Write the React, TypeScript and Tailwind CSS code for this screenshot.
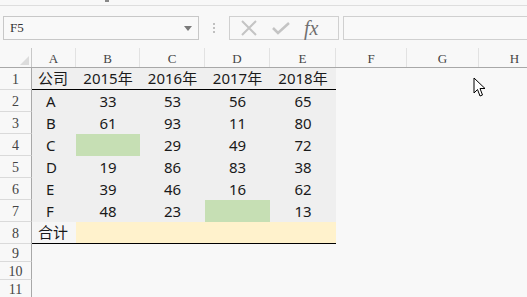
import React from 'react';

const COLS = [
  { key: 'A', w: 'w-[44px]' },
  { key: 'B', w: 'w-[64px]' },
  { key: 'C', w: 'w-[65px]' },
  { key: 'D', w: 'w-[65px]' },
  { key: 'E', w: 'w-[66px]' },
  { key: 'F', w: 'w-[71px]' },
  { key: 'G', w: 'w-[72px]' },
  { key: 'H', w: 'w-[72px]' },
];

type Cell = { text?: string; bg?: string };

const TABLE: Cell[][] = [
  [{ text: '公司' }, { text: '2015年' }, { text: '2016年' }, { text: '2017年' }, { text: '2018年' }],
  [{ text: 'A' }, { text: '33' }, { text: '53' }, { text: '56' }, { text: '65' }],
  [{ text: 'B' }, { text: '61' }, { text: '93' }, { text: '11' }, { text: '80' }],
  [{ text: 'C' }, { bg: 'bg-[#c6dfb4]' }, { text: '29' }, { text: '49' }, { text: '72' }],
  [{ text: 'D' }, { text: '19' }, { text: '86' }, { text: '83' }, { text: '38' }],
  [{ text: 'E' }, { text: '39' }, { text: '46' }, { text: '16' }, { text: '62' }],
  [{ text: 'F' }, { text: '48' }, { text: '23' }, { bg: 'bg-[#c6dfb4]' }, { text: '13' }],
  [
    { text: '合计' },
    { bg: 'bg-[#fff2cc]' },
    { bg: 'bg-[#fff2cc]' },
    { bg: 'bg-[#fff2cc]' },
    { bg: 'bg-[#fff2cc]' },
  ],
];

const serifUi = "font-['Liberation_Serif',serif]";
const sans = "font-['Noto_Sans','Noto_Sans_CJK_SC',sans-serif]";

function Toolbar() {
  return (
    <div className="h-[42px] flex items-start pt-[10px]">
      <div className="ml-[3px] w-[196px] h-[24px] border border-[#c8c8c8] bg-[#f9f9f9] flex items-center justify-between pl-[6px] pr-[6px]">
        <span className={`${serifUi} text-[13px] text-[#333]`}>F5</span>
        <svg width="8" height="5" viewBox="0 0 8 5">
          <path d="M0 0 L8 0 L4 5 Z" fill="#7a7a7a" />
        </svg>
      </div>
      <div className="w-[30px] h-[24px] flex flex-col items-center justify-center gap-[2px]">
        <span className="w-[2px] h-[2px] bg-[#c0c0c0]" />
        <span className="w-[2px] h-[2px] bg-[#c0c0c0]" />
        <span className="w-[2px] h-[2px] bg-[#c0c0c0]" />
      </div>
      <div className="w-[110px] h-[24px] border border-[#d0d0d0] flex items-center">
        <svg className="ml-[10px]" width="18" height="18" viewBox="0 0 18 18">
          <path d="M2 2 L16 16 M16 2 L2 16" stroke="#c4c4c4" strokeWidth="2" />
        </svg>
        <svg className="ml-[14px]" width="18" height="14" viewBox="0 0 18 14">
          <path d="M1 7 L6 12 L17 2" stroke="#c4c4c4" strokeWidth="2.5" fill="none" />
        </svg>
        <span className="ml-[14px] font-['Liberation_Serif',serif] italic text-[20px] leading-none text-[#707070]">
          fx
        </span>
      </div>
      <div className="ml-[4px] flex-1 h-[24px] border border-[#d0d0d0] border-r-0 bg-[#f9f9f9]" />
    </div>
  );
}

function HeaderRow() {
  return (
    <div className="flex h-[20px] border-b border-[#a8a8a8]">
      <div className="w-[32px] shrink-0 border-r border-[#c8c8c8] flex items-end justify-end pr-[2px] pb-[2px]">
        <svg width="9" height="9" viewBox="0 0 9 9">
          <path d="M9 0 L9 9 L0 9 Z" fill="#dcdcdc" />
        </svg>
      </div>
      {COLS.map((c) => (
        <div
          key={c.key}
          className={`${c.w} shrink-0 border-r border-[#e2e2e2] flex items-center justify-center pt-[2px] ${serifUi} text-[13px] text-[#444]`}
        >
          {c.key}
        </div>
      ))}
    </div>
  );
}

function RowHeader({ n, h }: { n: number; h: string }) {
  return (
    <div
      className={`w-[32px] ${h} shrink-0 border-r border-b border-r-[#a8a8a8] border-b-[#dadada] flex items-center justify-center pt-[2px] ${serifUi} text-[14px] text-[#444]`}
    >
      {n}
    </div>
  );
}

export default function App() {
  return (
    <div className="w-[527px] h-[297px] overflow-hidden bg-[#f8f8f8] relative">
      <div className="h-[6px] border-b border-[#dedede] relative">
        <span className="absolute left-[105px] top-0 w-[4px] h-[2px] bg-[#888]" />
      </div>
      <Toolbar />
      <HeaderRow />
      {TABLE.map((row, r) => (
        <div key={r} className="flex">
          <RowHeader n={r + 1} h="h-[22px]" />
          {row.map((cell, c) => {
            const underline = r === 0 || r === 7;
            return (
              <div
                key={c}
                className={`${COLS[c].w} h-[22px] shrink-0 flex items-center ${
                  c === 0 ? 'justify-start pl-[6px]' : 'justify-center'
                } ${sans} text-[15px] text-[#1a1a1a] ${
                  cell.bg ?? (r === 7 ? 'bg-[#f6f6f6]' : 'bg-[#efefef]')
                } ${underline ? 'border-b-[1.5px] border-black' : ''}`}
              >
                <span className={c === 0 && r !== 0 && r !== 7 ? 'ml-[8px]' : ''}>{cell.text}</span>
              </div>
            );
          })}
        </div>
      ))}
      {[9, 10, 11].map((n) => (
        <div key={n} className="flex">
          <RowHeader n={n} h="h-[18px]" />
        </div>
      ))}
      <svg className="absolute left-[473px] top-[77px]" width="14" height="21" viewBox="0 0 14 21">
        <path
          d="M1 1 L1 16 L4.5 12.5 L7 19 L9.5 18 L7 11.5 L12 11.5 Z"
          fill="#ffffff"
          stroke="#000000"
          strokeWidth="1"
          strokeLinejoin="round"
        />
      </svg>
    </div>
  );
}
